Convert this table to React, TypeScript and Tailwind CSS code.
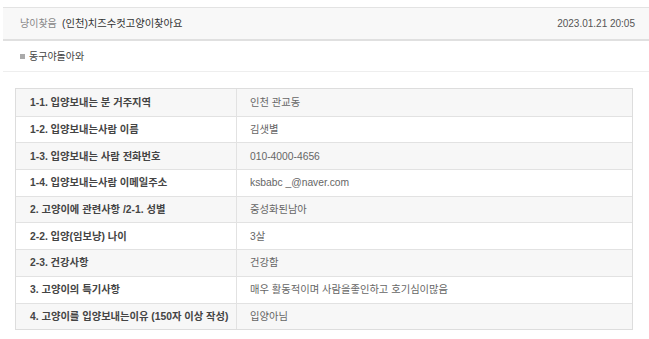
const rows: [string, string][] = [
  ["1-1. 입양보내는 분 거주지역", "인천 관교동"],
  ["1-2. 입양보내는사람 이름", "김샛별"],
  ["1-3. 입양보내는 사람 전화번호", "010-4000-4656"],
  ["1-4. 입양보내는사람 이메일주소", "ksbabc _@naver.com"],
  ["2. 고양이에 관련사항 /2-1. 성별", "중성화된남아"],
  ["2-2. 입양(임보냥) 나이", "3살"],
  ["2-3. 건강사항", "건강함"],
  ["3. 고양이의 특기사항", "매우 활동적이며 사람을좋인하고 호기심이많음"],
  ["4. 고양이를 입양보내는이유 (150자 이상 작성)", "입양아님"],
];

export default function App() {
  return (
    <div
      className="w-[649px] h-[339px] bg-white overflow-hidden pt-[7px] pl-[3px] text-[10px] text-[#333]"
      style={{ fontFamily: '"Liberation Sans", "Noto Sans CJK KR", sans-serif' }}
    >
      {/* title bar */}
      <div className="flex items-center justify-between h-[34px] border-t border-[#e3e3e3] border-b-2 border-b-[#e0e0e0] bg-[#f8f8f8] pl-[17px] pr-[14px]">
        <div className="flex items-center">
          <span className="text-[#888] w-[42px]">냥이찾음</span>
          <span className="text-[#333] text-[10.3px]">(인천)치즈수컷고양이찾아요</span>
        </div>
        <span className="text-[#555]">2023.01.21 20:05</span>
      </div>

      {/* author row */}
      <div className="flex items-center h-[31px] border-b border-[#eeeeee] pl-[17px] text-[#444]">
        <span className="w-[5px] h-[5px] bg-[#aaa] mr-[4px]" />
        <span>동구야돌아와</span>
      </div>

      {/* details table */}
      <div className="mt-[16px] ml-[12px] w-[618px] border border-[#dddddd] text-[10.3px]">
        {rows.map(([label, value], i) => (
          <div
            key={label}
            className={`flex h-[26.7px] ${i > 0 ? "border-t border-[#e2e2e2]" : ""} ${
              i % 2 === 0 ? "bg-[#f7f7f7]" : "bg-white"
            }`}
          >
            <div className="w-[221px] flex items-center pl-[14px] font-bold text-[#444] border-r border-[#e2e2e2]">
              {label}
            </div>
            <div className="flex-1 flex items-center pl-[13px] text-[#666]">{value}</div>
          </div>
        ))}
      </div>
    </div>
  );
}
